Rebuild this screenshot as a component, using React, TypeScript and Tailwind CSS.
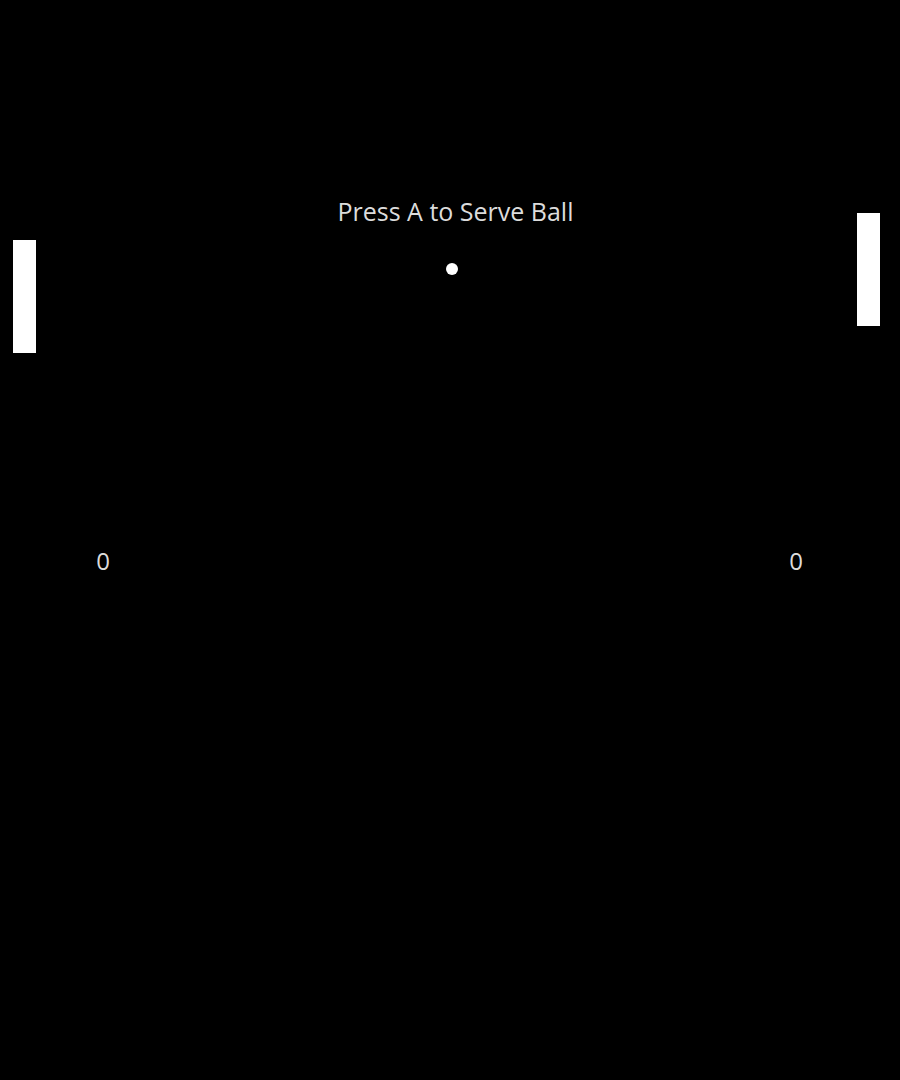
export default function App() {
  const font = { fontFamily: '"Open Sans", "Noto Sans", sans-serif' };
  return (
    <div className="relative w-[900px] h-[1080px] bg-black overflow-hidden" style={font}>
      <div className="absolute left-0 right-0 top-[193px] flex justify-center">
        <span className="text-[25px] leading-[36px] text-[#dcdcdc] pl-[11px]">Press A to Serve Ball</span>
      </div>
      <div className="absolute left-[446px] top-[263px] w-[12px] h-[12px] rounded-full bg-white" />
      <div className="absolute left-[13px] top-[240px] w-[23px] h-[113px] bg-white" />
      <div className="absolute left-[857px] top-[213px] w-[23px] h-[113px] bg-white" />
      <div className="absolute left-[93px] top-[543px] w-[20px] text-center text-[24px] leading-[36px] text-[#dcdcdc]">0</div>
      <div className="absolute left-[786px] top-[543px] w-[20px] text-center text-[24px] leading-[36px] text-[#dcdcdc]">0</div>
    </div>
  );
}
